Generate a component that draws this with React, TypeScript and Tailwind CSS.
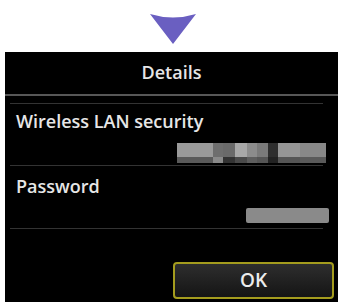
import React from "react";

const cols: [number, number, string, string][] = [
  [0, 36, "#9a9a9a", "#5a5a5a"],
  [36, 46, "#6e6e6e", "#8a8a8a"],
  [46, 58, "#6a6a6a", "#333333"],
  [58, 70, "#a8a8a8", "#4a4a4a"],
  [70, 80, "#8c8c8c", "#5e5e5e"],
  [80, 91, "#7a7a7a", "#555555"],
  [91, 101, "#2e2e2e", "#222222"],
  [101, 123, "#959595", "#555555"],
  [123, 149, "#888888", "#5a5a5a"],
];

export default function App() {
  return (
    <div
      className="w-[343px] h-[304px] bg-white flex flex-col overflow-hidden"
      style={{ fontFamily: '"Open Sans", "Liberation Sans", sans-serif' }}
    >
      <div className="h-[52px] flex justify-center pt-[14px] pl-[2px]">
        <svg width="46" height="30" viewBox="0 0 46 30">
          <path d="M0 0 Q23 7 46 0 L23 30 Z" fill="#6a5fc1" />
        </svg>
      </div>
      <div className="ml-[5px] w-[333px] h-[250px] bg-black flex flex-col text-[#e6e6e6] font-semibold text-[18px]">
        <div className="h-[42px] flex items-center justify-center pb-[2px]">Details</div>
        <div className="h-[2px] bg-[#575757]" />
        <div className="mt-[7px] ml-[5px] mr-[15px] h-px bg-[#333333]" />
        <div className="mt-[7px] ml-[11px] leading-[20px]">Wireless LAN security</div>
        <div className="mt-[12px] self-end mr-[12px] blur-[0.6px]">
          <svg width="149" height="20" viewBox="0 0 149 20" className="block">
            {cols.map(([a, b, t, u], i) => (
              <g key={i}>
                <rect x={a} y={0} width={b - a} height={14} fill={t} />
                <rect x={a} y={14} width={b - a} height={6} fill={u} />
              </g>
            ))}
          </svg>
        </div>
        <div className="mt-[2px] ml-[5px] mr-[15px] h-px bg-[#333333]" />
        <div className="mt-[10px] ml-[11px] leading-[20px]">Password</div>
        <div className="mt-[12px] self-end mr-[9px] w-[83px] h-[15px] rounded-[2px] bg-[#8a8a8a] blur-[0.5px]" />
        <div className="mt-[5px] ml-[5px] mr-[15px] h-px bg-[#333333]" />
        <div className="flex-1" />
        <div className="self-end mr-[4px] mb-[3px] w-[161px] h-[37px] rounded-[4px] border-2 border-[#a49c1e] bg-linear-to-b from-[#2e2e2e] to-[#151515] flex items-center justify-center text-[19px] text-[#ececec]">
          OK
        </div>
      </div>
    </div>
  );
}
